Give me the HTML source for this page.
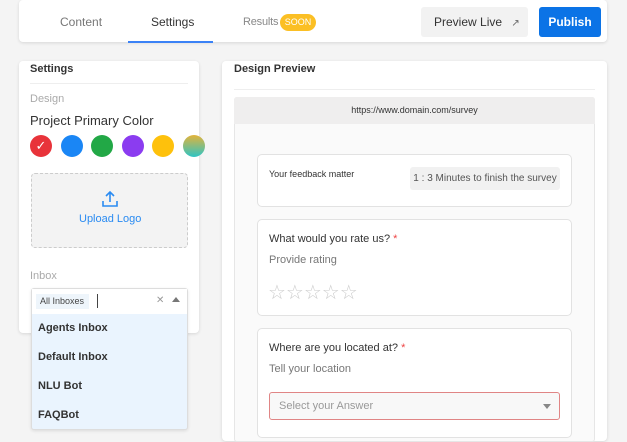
<!DOCTYPE html><html><head><style>
*{box-sizing:border-box;margin:0;padding:0}
body{width:627px;height:436px;background:#f4f4f4;font-family:"Liberation Sans",sans-serif;position:relative;overflow:hidden;color:#333}
.a{position:absolute}
.card{background:#fff;border-radius:4px;box-shadow:0 1px 3px rgba(0,0,0,.12)}
.c{border-radius:50%;width:22px;height:22px;top:135px}
.sc{background:#fff;border:1px solid #e2e2e2;border-radius:5px}
</style></head><body>
<div class="a card" style="left:19px;top:0;width:588px;height:42px"></div>
<div class="a" style="left:60px;top:15px;font-size:12px;color:#777">Content</div>
<div class="a" style="left:151px;top:15px;font-size:12px;color:#333">Settings</div>
<div class="a" style="left:128px;top:41px;width:85px;height:2px;background:#3b82f6"></div>
<div class="a" style="left:243px;top:16px;font-size:11px;color:#888;letter-spacing:-0.2px">Results</div>
<div class="a" style="left:280px;top:14px;width:36px;height:17px;border-radius:9px;background:#fbbf24;color:#fff;font-size:9px;line-height:17px;text-align:center">SOON</div>
<div class="a" style="left:421px;top:7px;width:107px;height:30px;background:#f2f2f2;border-radius:3px;font-size:12px;line-height:30px;padding-left:13px;color:#333">Preview Live <span style="font-size:10px;margin-left:6px;color:#666">↗</span></div>
<div class="a" style="left:539px;top:7px;width:62px;height:30px;background:#0b73e6;border-radius:3px;color:#fff;font-size:12px;font-weight:bold;line-height:30px;text-align:center">Publish</div>

<div class="a card" style="left:19px;top:61px;width:180px;height:272px"></div>
<div class="a" style="left:30px;top:63px;font-size:11px;font-weight:bold;color:#333">Settings</div>
<div class="a" style="left:30px;top:83px;width:158px;height:1px;background:#eee"></div>
<div class="a" style="left:30px;top:93px;font-size:11px;color:#aaa">Design</div>
<div class="a" style="left:30px;top:113px;font-size:13px;color:#333">Project Primary Color</div>
<div class="a c" style="left:30px;background:#e8333a;color:#fff;text-align:center;line-height:22px;font-size:13px">✓</div>
<div class="a c" style="left:61px;background:#1a86f5"></div>
<div class="a c" style="left:91px;background:#22a846"></div>
<div class="a c" style="left:122px;background:#8b3cf0"></div>
<div class="a c" style="left:152px;background:#fec10c"></div>
<div class="a c" style="left:183px;background:linear-gradient(#e3b33a,#2ec4c4)"></div>
<div class="a" style="left:31px;top:173px;width:157px;height:75px;border:1.5px dashed #ccc;border-radius:4px;background:#f3f3f3"></div>
<svg class="a" style="left:101px;top:190px" width="18" height="18" viewBox="0 0 18 18" fill="none" stroke="#2a8bf2" stroke-width="1.6"><path d="M9 12V2M5 6l4-4 4 4M2 11v5h14v-5"/></svg>
<div class="a" style="left:79px;top:213px;font-size:11px;color:#2a8bf2">Upload Logo</div>
<div class="a" style="left:30px;top:270px;font-size:11px;color:#aaa">Inbox</div>
<div class="a" style="left:31px;top:288px;width:157px;height:142px;border:1px solid #ddd;border-radius:3px;background:#eaf4fe;box-shadow:0 1px 3px rgba(0,0,0,.1)"></div>
<div class="a" style="left:32px;top:289px;width:155px;height:25px;background:#fff"></div>
<div class="a" style="left:36px;top:294px;width:53px;height:15px;background:#eef5fb;font-size:9px;line-height:15px;padding-left:4px;color:#444">All Inboxes</div>
<div class="a" style="left:97px;top:294px;width:1px;height:14px;background:#444"></div>
<div class="a" style="left:156px;top:295px;font-size:10px;color:#999">✕</div>
<div class="a" style="left:172px;top:297px;width:0;height:0;border-left:4px solid transparent;border-right:4px solid transparent;border-bottom:5px solid #777"></div>
<div class="a" style="left:38px;top:322px;font-size:11px;font-weight:bold;color:#333">Agents Inbox</div>
<div class="a" style="left:38px;top:351px;font-size:11px;font-weight:bold;color:#333">Default Inbox</div>
<div class="a" style="left:38px;top:380px;font-size:11px;font-weight:bold;color:#333">NLU Bot</div>
<div class="a" style="left:38px;top:409px;font-size:11px;font-weight:bold;color:#333">FAQBot</div>

<div class="a card" style="left:222px;top:61px;width:385px;height:380px"></div>
<div class="a" style="left:234px;top:63px;font-size:11px;font-weight:bold;color:#333">Design Preview</div>
<div class="a" style="left:234px;top:89px;width:361px;height:1px;background:#eee"></div>
<div class="a" style="left:234px;top:97px;width:361px;height:345px;border:1px solid #e6e6e6;border-radius:3px;background:#fafafa"></div>
<div class="a" style="left:234px;top:97px;width:361px;height:27px;background:#efeeee;border-radius:3px 3px 0 0;font-size:9px;text-align:center;line-height:27px;color:#333">https://www.domain.com/survey</div>
<div class="a sc" style="left:257px;top:154px;width:315px;height:53px"></div>
<div class="a" style="left:269px;top:169px;font-size:9px;color:#333">Your feedback matter</div>
<div class="a" style="left:410px;top:167px;width:150px;height:23px;background:#f1f1f1;border-radius:3px;font-size:10px;line-height:23px;text-align:center;color:#555">1 : 3 Minutes to finish the survey</div>
<div class="a sc" style="left:257px;top:219px;width:315px;height:97px"></div>
<div class="a" style="left:269px;top:233px;font-size:11px;color:#333">What would you rate us? <span style="color:#e44">*</span></div>
<div class="a" style="left:269px;top:254px;font-size:11px;color:#777">Provide rating</div>
<div class="a" style="left:268px;top:280px;font-size:20px;color:#ccc;letter-spacing:0px">☆☆☆☆☆</div>
<div class="a sc" style="left:257px;top:328px;width:315px;height:110px"></div>
<div class="a" style="left:269px;top:342px;font-size:11px;color:#333">Where are you located at? <span style="color:#e44">*</span></div>
<div class="a" style="left:269px;top:363px;font-size:11px;color:#777">Tell your location</div>
<div class="a" style="left:269px;top:392px;width:291px;height:28px;border:1px solid #e08585;border-radius:3px;background:#f8f8f8;font-size:11px;line-height:26px;padding-left:9px;color:#999">Select your Answer</div>
<div class="a" style="left:543px;top:404px;width:0;height:0;border-left:4px solid transparent;border-right:4px solid transparent;border-top:5px solid #888"></div>
</body></html>
